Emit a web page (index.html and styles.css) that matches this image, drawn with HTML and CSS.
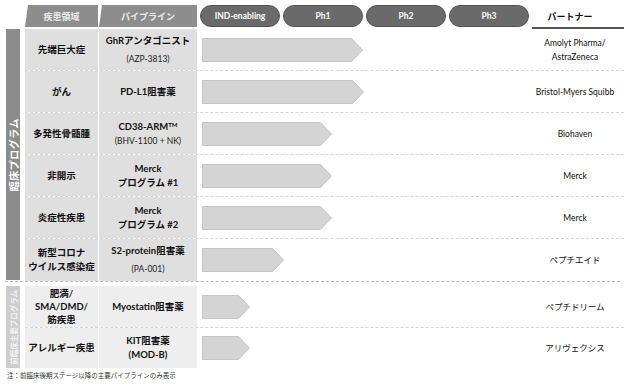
FILE: index.html
```html
<!DOCTYPE html>
<html lang="ja">
<head>
<meta charset="utf-8">
<link rel="stylesheet" href="styles.css">
</head>
<body>
<div class="page">
  <div class="head">
    <div class="tab tab-area">疾患領域</div>
    <div class="tab tab-pipe">パイプライン</div>
    <div class="phases">
      <div class="pill">IND-enabling</div>
      <div class="pill">Ph1</div>
      <div class="pill">Ph2</div>
      <div class="pill">Ph3</div>
    </div>
    <div class="partner-head">パートナー</div>
  </div>

  <div class="group clinical">
    <div class="side"><span>臨床プログラム</span></div>
    <div class="rows">
      <div class="row">
        <div class="cell area">先端巨大症</div>
        <div class="cell pipe"><span>GhRアンタゴニスト</span><span class="sub wide">(AZP-3813)</span></div>
        <div class="track"><svg width="161" height="24"><polygon points="0.5,0.5 149.5,0.5 160.5,12 149.5,23.5 0.5,23.5"/></svg></div>
        <div class="partner">Amolyt Pharma/<br>AstraZeneca</div>
      </div>
      <div class="row">
        <div class="cell area">がん</div>
        <div class="cell pipe"><span>PD-L1阻害薬</span></div>
        <div class="track"><svg width="162" height="24"><polygon points="0.5,0.5 150.5,0.5 161.5,12 150.5,23.5 0.5,23.5"/></svg></div>
        <div class="partner">Bristol-Myers Squibb</div>
      </div>
      <div class="row">
        <div class="cell area">多発性骨髄腫</div>
        <div class="cell pipe"><span>CD38-ARM<sup>TM</sup></span><span class="sub">(BHV-1100 + NK)</span></div>
        <div class="track"><svg width="130" height="24"><polygon points="0.5,0.5 118.5,0.5 129.5,12 118.5,23.5 0.5,23.5"/></svg></div>
        <div class="partner">Biohaven</div>
      </div>
      <div class="row">
        <div class="cell area">非開示</div>
        <div class="cell pipe"><span>Merck</span><span>プログラム #1</span></div>
        <div class="track"><svg width="130" height="24"><polygon points="0.5,0.5 118.5,0.5 129.5,12 118.5,23.5 0.5,23.5"/></svg></div>
        <div class="partner">Merck</div>
      </div>
      <div class="row">
        <div class="cell area">炎症性疾患</div>
        <div class="cell pipe"><span>Merck</span><span>プログラム #2</span></div>
        <div class="track"><svg width="130" height="24"><polygon points="0.5,0.5 118.5,0.5 129.5,12 118.5,23.5 0.5,23.5"/></svg></div>
        <div class="partner">Merck</div>
      </div>
      <div class="row last">
        <div class="cell area">新型コロナ<br>ウイルス感染症</div>
        <div class="cell pipe"><span>S2-protein阻害薬</span><span class="sub wide">(PA-001)</span></div>
        <div class="track"><svg width="82" height="24"><polygon points="0.5,0.5 70.5,0.5 81.5,12 70.5,23.5 0.5,23.5"/></svg></div>
        <div class="partner">ペプチエイド</div>
      </div>
    </div>
  </div>

  <div class="sep"></div>

  <div class="group pre">
    <div class="side"><span>前臨床主要プログラム</span></div>
    <div class="rows">
      <div class="row">
        <div class="cell area tight">肥満/<br>SMA/DMD/<br>筋疾患</div>
        <div class="cell pipe"><span>Myostatin阻害薬</span></div>
        <div class="track"><svg width="48" height="24"><polygon points="0.5,0.5 36.5,0.5 47.5,12 36.5,23.5 0.5,23.5"/></svg></div>
        <div class="partner">ペプチドリーム</div>
      </div>
      <div class="row last short">
        <div class="cell area">アレルギー疾患</div>
        <div class="cell pipe"><span>KIT阻害薬</span><span>(MOD-B)</span></div>
        <div class="track"><svg width="48" height="24"><polygon points="0.5,0.5 36.5,0.5 47.5,12 36.5,23.5 0.5,23.5"/></svg></div>
        <div class="partner">アリヴェクシス</div>
      </div>
    </div>
  </div>

  <p class="note">注：前臨床後期ステージ以降の主要パイプラインのみ表示</p>
</div>
</body>
</html>
```

FILE: styles.css
```css
* { box-sizing: border-box; }
html, body { margin: 0; padding: 0; background: #fff; }
body {
  font-family: "Lato", "Noto Sans CJK JP", sans-serif;
  color: #111;
  width: 624px;
  height: 384px;
  overflow: hidden;
}
.page { padding: 5px 0 0 6px; }

.head {
  display: flex;
  align-items: flex-start;
  padding-left: 19px;
}
.tab {
  height: 22px;
  background: #8d8d8d;
  color: #ececec;
  font-size: 9px;
  font-weight: 700;
  display: flex;
  align-items: center;
  justify-content: center;
  clip-path: polygon(3px 0, 100% 0, 100% 100%, 0 100%);
}
.tab-area { width: 73px; }
.tab-pipe { width: 98px; margin-left: 1px; }
.phases {
  display: flex;
  gap: 3px;
  margin-left: 3px;
}
.pill {
  width: 80px;
  height: 22px;
  border-radius: 11px;
  background: #6a6a6a;
  border: 1px solid #555;
  color: #fff;
  font-size: 8.5px;
  font-weight: 700;
  display: flex;
  align-items: center;
  justify-content: center;
}
.partner-head {
  flex: 1;
  margin-left: 3px;
  height: 24px;
  border-bottom: 2px solid #555;
  font-size: 9px;
  font-weight: 700;
  display: flex;
  align-items: center;
  justify-content: center;
  padding-right: 16px;
}

.group { display: flex; }
.side {
  width: 14px;
  margin-right: 5px;
  display: flex;
  align-items: center;
  justify-content: center;
}
.side span {
  writing-mode: vertical-rl;
  text-orientation: sideways;
  transform: rotate(180deg);
  font-weight: 700;
  white-space: nowrap;
}
.clinical .side { background: #8c8c8c; margin-bottom: 1px; }
.clinical .side span { color: #fff; font-size: 10px; letter-spacing: 0.5px; }
.pre .side { background: #cdcdcd; }
.pre .side span { color: #f3f3f3; font-size: 7.5px; }

.rows { flex: 1; display: flex; flex-direction: column; }
.row {
  height: 42px;
  display: grid;
  grid-template-columns: 73px 99px 333px 1fr;
  border-bottom: 1px dashed #d6d6d6;
}
.row.last { border-bottom: none; }
.row.short { height: 40px; }

.cell {
  display: flex;
  flex-direction: column;
  align-items: center;
  justify-content: center;
  text-align: center;
  font-size: 9.5px;
  font-weight: 700;
  line-height: 14px;
}
.clinical .cell { background: #dfdfdf; }
.pre .cell { background: #eeeeee; }
.pipe { margin-left: 1px; }
.cell.tight { line-height: 13px; }
.sub { font-weight: 400; color: #222; font-size: 8.5px; }
.sub.wide { margin-top: 4px; }
sup { font-size: 6px; line-height: 0; vertical-align: 3.5px; }

.track {
  display: flex;
  align-items: center;
  padding-left: 5px;
}
.track svg { display: block; }
.track polygon { fill: #d4d4d4; stroke: #c6c6c6; stroke-width: 1; }

.partner {
  display: flex;
  align-items: center;
  justify-content: center;
  text-align: center;
  font-size: 8.5px;
  line-height: 14px;
  padding-right: 4px;
}

.sep {
  height: 1px;
  margin: 0 4px 4px -1px;
  border-top: 1px dashed #b8b8b8;
}

.note {
  margin: 4px 0 0 1px;
  font-size: 6.5px;
  color: #333;
  line-height: 8px;
}
```
